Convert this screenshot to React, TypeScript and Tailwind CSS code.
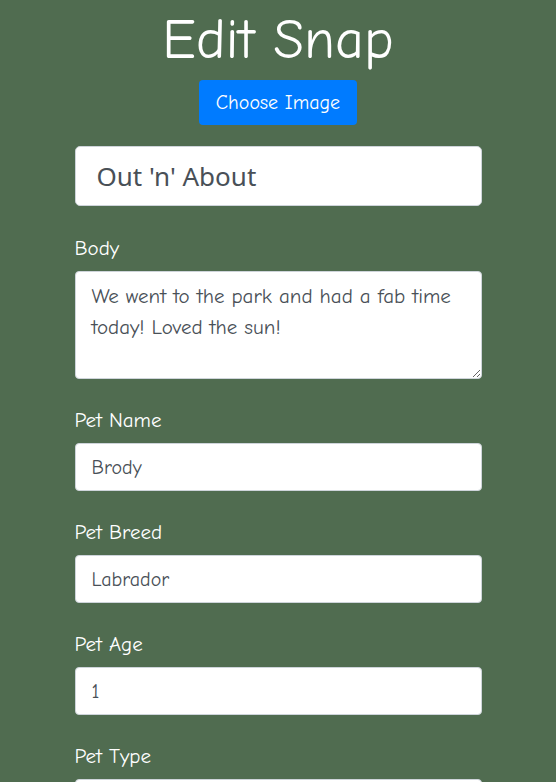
import React, { useState } from 'react';

const comic = "font-['Comic_Sans_MS','Comic_Neue','Lato',sans-serif]";

const Field: React.FC<{ label: string; value: string; onChange: (v: string) => void }> = ({ label, value, onChange }) => (
  <div className="mb-[26px]">
    <label className="block text-[21px] leading-[30px] text-white mb-[8px]">{label}</label>
    <input
      value={value}
      onChange={(e) => onChange(e.target.value)}
      className="block w-full h-[48px] px-[16px] bg-white border border-[#ced4da] rounded-[4px] text-[20px] text-[#495057] outline-none"
    />
  </div>
);

const App: React.FC = () => {
  const [title, setTitle] = useState("Out 'n' About");
  const [body, setBody] = useState('We went to the park and had a fab time today! Loved the sun!');
  const [petName, setPetName] = useState('Brody');
  const [petBreed, setPetBreed] = useState('Labrador');
  const [petAge, setPetAge] = useState('1');
  const [petType, setPetType] = useState('Dog');

  return (
    <div className={`min-h-[782px] bg-[#506c50] ${comic}`}>
      <div className="w-[407px] mx-auto pt-[5px]">
        <h1 className="text-center text-white text-[56px] leading-[70px]">Edit Snap</h1>
        <div className="flex justify-center mt-[5px]">
          <button className="h-[45px] px-[17px] bg-[#007bff] text-white text-[20px] rounded-[4px]">
            Choose Image
          </button>
        </div>

        {/* Title */}
        <input
          value={title}
          onChange={(e) => setTitle(e.target.value)}
          className="block w-full h-[60px] mt-[21px] px-[21px] bg-white border border-[#ced4da] rounded-[5px] text-[26px] text-[#495057] font-['Noto_Sans',sans-serif] outline-none"
        />

        <div className="mt-[27px] mb-[26px]">
          <label className="block text-[21px] leading-[30px] text-white mb-[8px]">Body</label>
          <textarea
            value={body}
            onChange={(e) => setBody(e.target.value)}
            className="block w-full h-[108px] px-[16px] py-[9px] bg-white border border-[#ced4da] rounded-[4px] text-[21px] leading-[31px] text-[#495057] outline-none"
          />
        </div>

        <Field label="Pet Name" value={petName} onChange={setPetName} />
        <Field label="Pet Breed" value={petBreed} onChange={setPetBreed} />
        <Field label="Pet Age" value={petAge} onChange={setPetAge} />
        <Field label="Pet Type" value={petType} onChange={setPetType} />
      </div>
    </div>
  );
};

export default App;
